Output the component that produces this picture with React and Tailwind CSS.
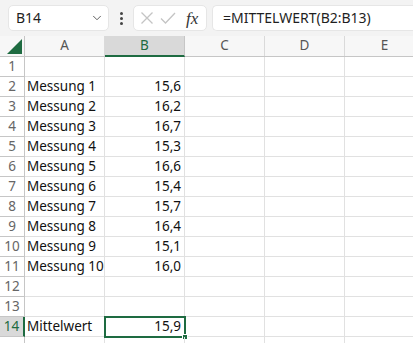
import { ChevronDown } from 'lucide-react';

const rows = [
  ['', ''],
  ['Messung 1', '15,6'],
  ['Messung 2', '16,2'],
  ['Messung 3', '16,7'],
  ['Messung 4', '15,3'],
  ['Messung 5', '16,6'],
  ['Messung 6', '15,4'],
  ['Messung 7', '15,7'],
  ['Messung 8', '16,4'],
  ['Messung 9', '15,1'],
  ['Messung 10', '16,0'],
  ['', ''],
  ['', ''],
  ['Mittelwert', '15,9'],
  ['', ''],
];

const cols = ['A', 'B', 'C', 'D', 'E'];

function Toolbar() {
  return (
    <div className="flex items-center h-[36px] bg-[#f3f3f3] pl-[8px] gap-[5px]">
      <div className="flex items-center justify-between w-[101px] h-[26px] bg-white rounded-[5px] border border-[#e6e6e6] pl-[7px] pr-[4px]">
        <span className="text-[14px] text-[#1f1f1f]">B14</span>
        <ChevronDown className="w-[14px] h-[14px] text-[#555]" strokeWidth={1.6} />
      </div>
      <div className="flex flex-col items-center gap-[2px] w-[14px]">
        <span className="w-[3px] h-[3px] rounded-full bg-[#444]" />
        <span className="w-[3px] h-[3px] rounded-full bg-[#444]" />
        <span className="w-[3px] h-[3px] rounded-full bg-[#444]" />
      </div>
      <div className="flex items-center w-[74px] h-[26px] bg-white rounded-[5px] border border-[#e6e6e6] pl-[6px] gap-[6px]">
        <svg width="14" height="14" viewBox="0 0 14 14" fill="none" stroke="#c4c4c4" strokeWidth="1.3">
          <path d="M1.5 1.5 L12.5 12.5 M12.5 1.5 L1.5 12.5" />
        </svg>
        <svg width="16" height="14" viewBox="0 0 16 14" fill="none" stroke="#c4c4c4" strokeWidth="1.3">
          <path d="M1 7.5 L5.5 12 L15 2" />
        </svg>
        <span className="ml-[4px] text-[17px] italic text-[#333] leading-none" style={{ fontFamily: '"Liberation Serif", serif' }}>
          fx
        </span>
      </div>
      <div className="flex items-center flex-1 h-[26px] bg-white rounded-l-[5px] border border-r-0 border-[#e6e6e6] pl-[10px]">
        <span className="text-[14px] text-[#1f1f1f]">=MITTELWERT(B2:B13)</span>
      </div>
    </div>
  );
}

function HeaderRow() {
  return (
    <div className="flex h-[21px] bg-[#f7f7f7] border-b border-[#c6c6c6]">
      <div className="w-[25px] shrink-0 border-r border-[#c6c6c6] flex items-end justify-end pr-[2px] pb-[2px]">
        <svg width="15" height="15" viewBox="0 0 15 15">
          <path d="M15 0 L15 15 L0 15 Z" fill="#1e6b41" />
        </svg>
      </div>
      {cols.map((c) => (
        <div
          key={c}
          className={
            c === 'B'
              ? 'w-[80px] shrink-0 flex items-center justify-center bg-[#d9d9d9] text-[#1e6b41] border-r border-[#c6c6c6] border-b-2 border-b-[#1e6b41] -mb-px'
              : 'w-[80px] shrink-0 flex items-center justify-center text-[#555] border-r border-[#dadada]'
          }
        >
          {c}
        </div>
      ))}
    </div>
  );
}

function Row({ n, label, value }) {
  const sel = n === 14;
  return (
    <div className="flex h-[20px]">
      <div
        className={
          sel
            ? 'w-[25px] shrink-0 flex items-center justify-center bg-[#d9d9d9] text-[#1e6b41] border-r-2 border-[#1e6b41] border-b border-b-[#c6c6c6]'
            : 'w-[25px] shrink-0 flex items-center justify-center bg-white text-[#666] border-r border-b border-[#c6c6c6]'
        }
      >
        {n < 15 ? n : ''}
      </div>
      <div className="w-[80px] shrink-0 border-r border-b border-[#e1e1e1] pl-[2px] flex items-center text-[#111] whitespace-nowrap">{label}</div>
      <div className="relative w-[80px] shrink-0 border-r border-b border-[#e1e1e1] pr-[3px] flex items-center justify-end text-[#111]">
        {value}
        {sel && (
          <div className="absolute -left-[1px] -top-[1px] w-[82px] h-[22px] border-2 border-[#1e6b41]">
            <span className="absolute -right-[4px] -bottom-[4px] w-[6px] h-[6px] bg-[#1e6b41] border border-white" />
          </div>
        )}
      </div>
      <div className="w-[80px] shrink-0 border-r border-b border-[#e1e1e1]" />
      <div className="w-[80px] shrink-0 border-r border-b border-[#e1e1e1]" />
      <div className="w-[80px] shrink-0 border-r border-b border-[#e1e1e1]" />
    </div>
  );
}

export default function App() {
  return (
    <div
      className="w-[413px] h-[343px] overflow-hidden bg-white text-[13.5px] leading-none"
      style={{ fontFamily: '"Noto Sans", "Open Sans", sans-serif' }}
    >
      <Toolbar />
      <HeaderRow />
      {rows.map((r, i) => (
        <Row key={i} n={i + 1} label={r[0]} value={r[1]} />
      ))}
    </div>
  );
}
